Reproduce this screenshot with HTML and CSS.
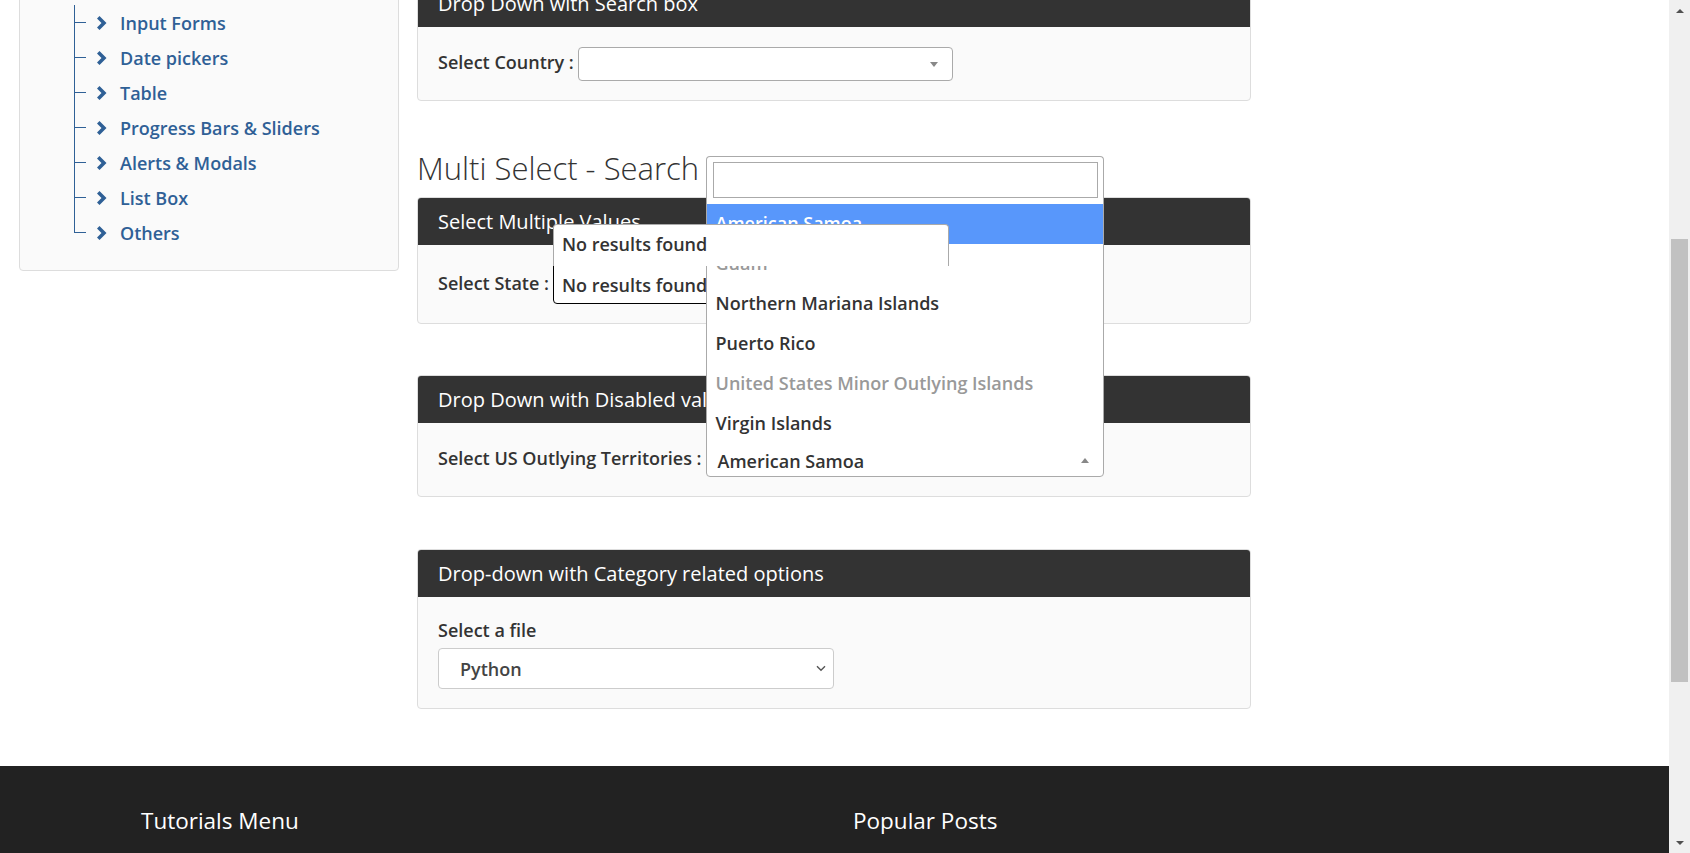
FILE: index.html
```html
<!DOCTYPE html>
<html lang="en">
<head>
<meta charset="utf-8">
<title>Select Dropdown Demo</title>
<link rel="stylesheet" href="styles.css">
</head>
<body>
<div class="viewport">
  <div class="page">
    <div class="content">
      <aside class="sidebar">
        <div class="parent-item">
          <svg class="chev" width="11" height="14" viewBox="0 0 11 14"><polygon points="1,2.5 3.5,0 10.5,7 3.5,14 1,11.5 5.5,7"/></svg>
          <span>All Examples</span>
        </div>
        <ul class="tree">
          <li><span class="conn"><i class="conn-top"></i><i class="conn-bot"></i></span><svg class="chev" width="11" height="14" viewBox="0 0 11 14"><polygon points="1,2.5 3.5,0 10.5,7 3.5,14 1,11.5 5.5,7"/></svg><a href="#">Input Forms</a></li>
          <li><span class="conn"><i class="conn-top"></i><i class="conn-bot"></i></span><svg class="chev" width="11" height="14" viewBox="0 0 11 14"><polygon points="1,2.5 3.5,0 10.5,7 3.5,14 1,11.5 5.5,7"/></svg><a href="#">Date pickers</a></li>
          <li><span class="conn"><i class="conn-top"></i><i class="conn-bot"></i></span><svg class="chev" width="11" height="14" viewBox="0 0 11 14"><polygon points="1,2.5 3.5,0 10.5,7 3.5,14 1,11.5 5.5,7"/></svg><a href="#">Table</a></li>
          <li><span class="conn"><i class="conn-top"></i><i class="conn-bot"></i></span><svg class="chev" width="11" height="14" viewBox="0 0 11 14"><polygon points="1,2.5 3.5,0 10.5,7 3.5,14 1,11.5 5.5,7"/></svg><a href="#">Progress Bars &amp; Sliders</a></li>
          <li><span class="conn"><i class="conn-top"></i><i class="conn-bot"></i></span><svg class="chev" width="11" height="14" viewBox="0 0 11 14"><polygon points="1,2.5 3.5,0 10.5,7 3.5,14 1,11.5 5.5,7"/></svg><a href="#">Alerts &amp; Modals</a></li>
          <li><span class="conn"><i class="conn-top"></i><i class="conn-bot"></i></span><svg class="chev" width="11" height="14" viewBox="0 0 11 14"><polygon points="1,2.5 3.5,0 10.5,7 3.5,14 1,11.5 5.5,7"/></svg><a href="#">List Box</a></li>
          <li class="last"><span class="conn"><i class="conn-top"></i><i class="conn-bot"></i></span><svg class="chev" width="11" height="14" viewBox="0 0 11 14"><polygon points="1,2.5 3.5,0 10.5,7 3.5,14 1,11.5 5.5,7"/></svg><a href="#">Others</a></li>
        </ul>
      </aside>

      <main class="main">
        <section class="panel">
          <div class="panel-heading">Drop Down with Search box</div>
          <div class="panel-body">
            <div class="field">
              <label class="lbl">Select Country :</label>
              <div class="s2-single country">
                <span class="s2-text"></span>
                <span class="arrow-down"></span>
              </div>
            </div>
          </div>
        </section>

        <h3 class="section-title">Multi Select - Search</h3>

        <section class="panel panel-2">
          <div class="panel-heading">Select Multiple Values</div>
          <div class="panel-body">
            <div class="field">
              <label class="lbl">Select State :</label>
              <div class="s2-multi">
                <div class="s2-popup">No results found</div>
                <span class="s2-multi-text">No results found</span>
              </div>
            </div>
          </div>
        </section>

        <section class="panel panel-3">
          <div class="panel-heading">Drop Down with Disabled values</div>
          <div class="panel-body">
            <div class="field">
              <label class="lbl">Select US Outlying Territories :</label>
              <div class="s2-single open">
                <div class="s2-dropdown">
                  <div class="s2-search"><div class="s2-search-field"></div></div>
                  <ul class="s2-results">
                    <li class="hl">American Samoa</li>
                    <li class="dis">Guam</li>
                    <li>Northern Mariana Islands</li>
                    <li>Puerto Rico</li>
                    <li class="dis">United States Minor Outlying Islands</li>
                    <li>Virgin Islands</li>
                  </ul>
                </div>
                <span class="s2-text">American Samoa</span>
                <span class="arrow-up"></span>
              </div>
            </div>
          </div>
        </section>

        <section class="panel panel-4">
          <div class="panel-heading">Drop-down with Category related options</div>
          <div class="panel-body">
            <label class="lbl block">Select a file</label>
            <div class="native-select">
              <span>Python</span>
              <svg width="10" height="7" viewBox="0 0 10 7"><polyline points="1,1.2 5,5.2 9,1.2" fill="none" stroke="#555" stroke-width="1.4"/></svg>
            </div>
          </div>
        </section>
      </main>
    </div>

    <footer class="footer">
      <div class="footer-col"><h4>Tutorials Menu</h4></div>
      <div class="footer-col"><h4>Popular Posts</h4></div>
    </footer>
  </div>

  <div class="scrollbar">
    <div class="sb-btn"><span class="sb-up"></span></div>
    <div class="sb-track"><div class="sb-thumb" style="margin-top:218px;height:443px"></div></div>
    <div class="sb-btn"><span class="sb-down"></span></div>
  </div>
</div>
</body>
</html>
```

FILE: styles.css
```css
* { box-sizing: border-box; }

html, body {
  margin: 0;
  padding: 0;
  height: 853px;
  overflow: hidden;
}

body {
  font-family: "Open Sans", "Liberation Sans", sans-serif;
  color: #333;
  background: #fff;
}

.viewport {
  display: flex;
  width: 1690px;
  height: 853px;
  overflow: hidden;
}

.page {
  flex: 1;
  min-width: 0;
  overflow: hidden;
  background: #fff;
}

.content {
  display: flex;
  align-items: flex-start;
  gap: 18px;
  padding-left: 19px;
  margin-top: -45px;
}

/* ---------- Sidebar ---------- */
.sidebar {
  width: 380px;
  flex: none;
  border: 1px solid #ddd;
  border-radius: 4px;
  background: #fafafa;
  padding: 14px 0 20px;
  color: #2f6096;
}

.parent-item {
  height: 35px;
  display: flex;
  align-items: center;
  gap: 12px;
  padding-left: 40px;
  font-size: 18px;
  font-weight: 600;
}

.chev { fill: #2f6096; flex: none; }

.tree {
  list-style: none;
  margin: 0;
  padding: 0 0 0 54px;
}

.tree li {
  height: 35px;
  display: flex;
  align-items: center;
}

.conn {
  width: 12px;
  height: 35px;
  display: flex;
  flex-direction: column;
  flex: none;
  margin-right: 10px;
}

.conn-top {
  height: 18px;
  border-left: 1px solid #2f6096;
  border-bottom: 1px solid #2f6096;
}

.conn-bot {
  flex: 1;
  border-left: 1px solid #2f6096;
}

.tree li.last .conn-bot { border-left-color: transparent; }

.tree a {
  margin-left: 13px;
  color: #2f6096;
  text-decoration: none;
  font-size: 18px;
  font-weight: 600;
}

/* ---------- Main ---------- */
.main {
  width: 834px;
  flex: none;
  padding-top: 24px;
  margin-bottom: 57px;
}

.panel {
  border: 1px solid #ddd;
  border-radius: 4px;
  background: #fafafa;
}

.panel-heading {
  height: 47px;
  background: #333;
  color: #fff;
  display: flex;
  align-items: center;
  padding: 0 20px;
  font-size: 20px;
  border-radius: 3px 3px 0 0;
  white-space: nowrap;
}

.panel-body {
  padding: 20px 20px 19px;
}

.panel-3 { margin-top: 51px; }
.panel-4 { margin-top: 52px; }

.section-title {
  margin: 49px 0 11px;
  height: 36px;
  line-height: 36px;
  font-size: 31px;
  font-weight: 300;
  color: #333;
}

.field {
  display: flex;
  align-items: center;
}

.lbl {
  font-size: 18px;
  font-weight: 600;
  color: #333;
  margin-right: 4px;
  margin-bottom: 4px;
  white-space: nowrap;
}

.lbl.block {
  display: block;
  height: 26px;
  line-height: 26px;
  margin: 0 0 5px;
}

/* select2 single */
.s2-single {
  position: relative;
  width: 375px;
  height: 34px;
  border: 1px solid #aaa;
  border-radius: 4px;
  background: #fff;
  display: flex;
  align-items: center;
  padding: 0 14px 0 11px;
}

.s2-single.open {
  width: 398px;
  border-radius: 0 0 4px 4px;
}

.s2-text {
  flex: 1;
  padding-top: 2px;
  font-size: 18px;
  font-weight: 600;
  color: #333;
  white-space: nowrap;
}

.arrow-down {
  width: 0;
  height: 0;
  border-left: 4px solid transparent;
  border-right: 4px solid transparent;
  border-top: 5px solid #888;
}

.arrow-up {
  width: 0;
  height: 0;
  border-left: 4px solid transparent;
  border-right: 4px solid transparent;
  border-bottom: 5px solid #888;
}

.s2-dropdown {
  position: absolute;
  left: -1px;
  right: -1px;
  bottom: 100%;
  z-index: 10;
  background: #fff;
  border: 1px solid #aaa;
  border-bottom: none;
  border-radius: 4px 4px 0 0;
}

.s2-search {
  padding: 5px 5px 6px 6px;
}

.s2-search-field {
  height: 36px;
  border: 1px solid #aaa;
  background: #fff;
}

.s2-results {
  list-style: none;
  margin: 0;
  padding: 0;
}

.s2-results li {
  height: 40px;
  line-height: 38px;
  padding-left: 9px;
  font-size: 18px;
  font-weight: 600;
  color: #333;
  white-space: nowrap;
}

.s2-results li.hl { background: #5897fb; color: #fff; }
.s2-results li.dis { color: #999; }

/* select2 multiple */
.s2-multi {
  position: relative;
  width: 396px;
  height: 39px;
  border: 1px solid #000;
  border-radius: 0 0 4px 4px;
  background: #fff;
  display: flex;
  align-items: center;
  padding-left: 8px;
}

.s2-multi-text {
  font-size: 18px;
  font-weight: 600;
  color: #333;
}

.s2-popup {
  position: absolute;
  left: -1px;
  right: -1px;
  bottom: 100%;
  z-index: 20;
  height: 42px;
  background: #fff;
  border: 1px solid #aaa;
  border-bottom: none;
  border-radius: 4px 4px 0 0;
  padding: 0 0 4px 8px;
  display: flex;
  align-items: center;
  font-size: 18px;
  font-weight: 600;
  color: #333;
}

/* native select look */
.native-select {
  width: 396px;
  height: 41px;
  border: 1px solid #ccc;
  border-radius: 4px;
  background: #fff;
  display: flex;
  align-items: center;
  justify-content: space-between;
  padding: 0 7px 0 21px;
  font-size: 18px;
  font-weight: 600;
  color: #444;
}

/* ---------- Footer ---------- */
.footer {
  background: #222;
  height: 200px;
  display: grid;
  grid-template-columns: 712px 1fr;
  padding: 40px 0 0 141px;
}

.footer h4 {
  margin: 0;
  height: 30px;
  line-height: 30px;
  font-size: 22.5px;
  font-weight: 400;
  color: #fff;
}

/* ---------- Scrollbar ---------- */
.scrollbar {
  width: 21px;
  flex: none;
  background: #f0f0f0;
  display: flex;
  flex-direction: column;
}

.sb-btn {
  height: 21px;
  display: flex;
  align-items: center;
  justify-content: center;
}

.sb-up {
  width: 0; height: 0;
  border-left: 4px solid transparent;
  border-right: 4px solid transparent;
  border-bottom: 4px solid #505050;
}

.sb-down {
  width: 0; height: 0;
  border-left: 4px solid transparent;
  border-right: 4px solid transparent;
  border-top: 4px solid #505050;
}

.sb-track { flex: 1; padding: 0 2px; }

.sb-thumb { background: #c1c1c1; }
```
